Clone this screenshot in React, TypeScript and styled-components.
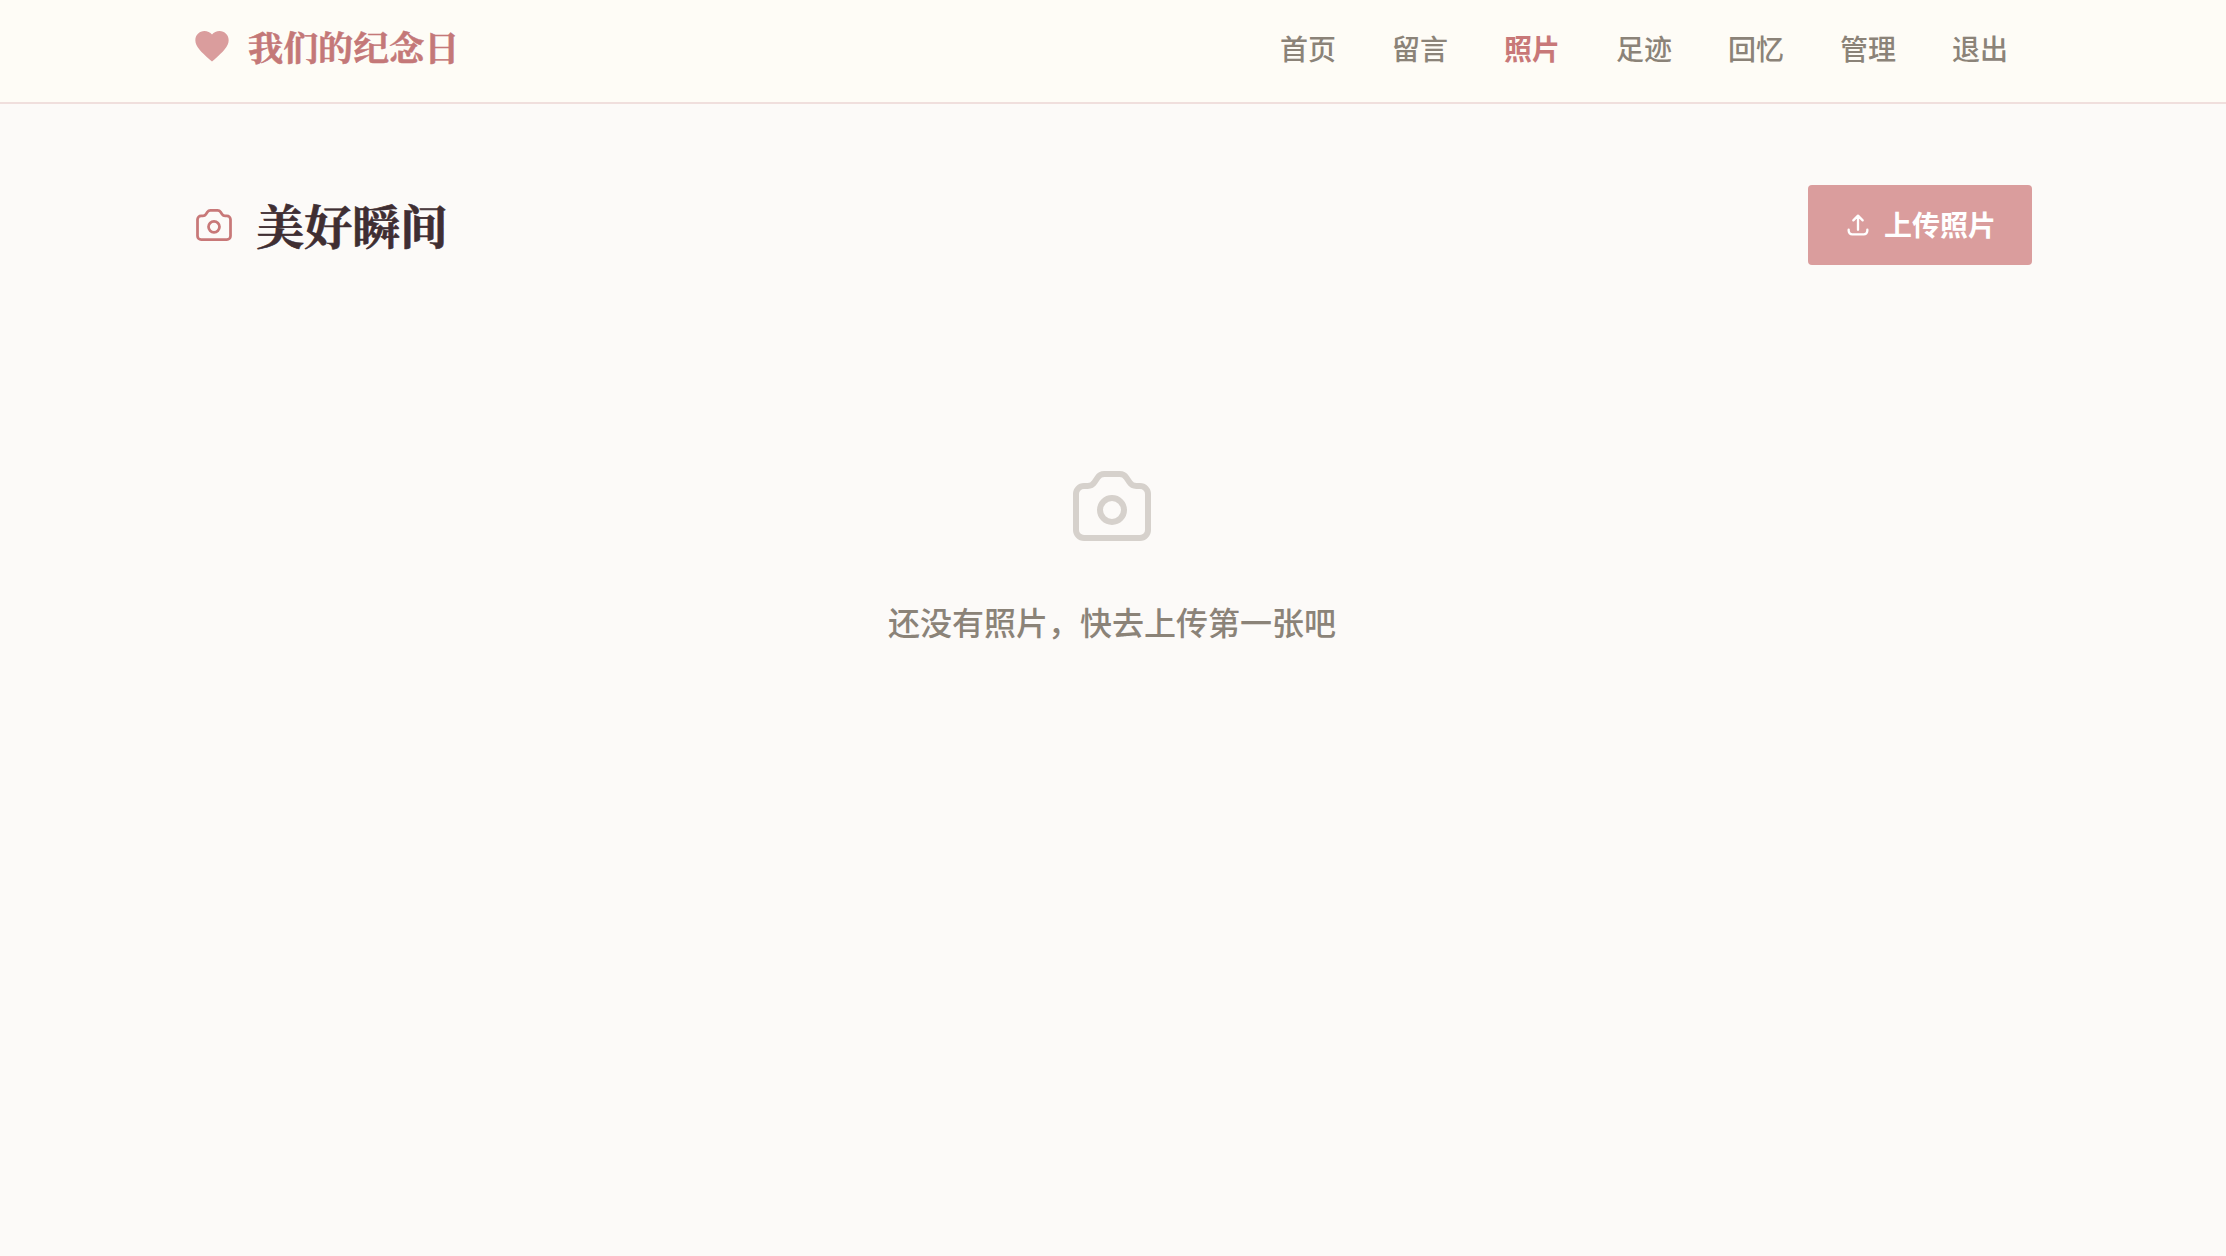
import styled, { createGlobalStyle } from "styled-components";

const navItems = ["首页", "留言", "照片", "足迹", "回忆", "管理", "退出"];

export default function App() {
  return (
    <>
      <GlobalStyle />
      <Header>
        <HeaderInner>
          <Brand>
            <HeartIcon viewBox="0 0 24 24" aria-hidden="true">
              <path d="M12 21.35l-1.45-1.32C5.4 15.36 2 12.28 2 8.5 2 5.42 4.42 3 7.5 3c1.74 0 3.41.81 4.5 2.09C13.09 3.81 14.76 3 16.5 3 19.58 3 22 5.42 22 8.5c0 3.78-3.4 6.86-8.55 11.54L12 21.35z" />
            </HeartIcon>
            <BrandText>我们的纪念日</BrandText>
          </Brand>

          <Nav>
            {navItems.map((item) => (
              <NavLink key={item} href="#" $active={item === "照片"}>
                {item}
              </NavLink>
            ))}
          </Nav>
        </HeaderInner>
      </Header>

      <Main>
        <TitleRow>
          <TitleGroup>
            <CameraIcon size={44} color="#c87878" />
            <Title>美好瞬间</Title>
          </TitleGroup>

          <UploadButton type="button">
            <UploadIcon viewBox="0 0 24 24" aria-hidden="true">
              <path d="M4 16v1a3 3 0 003 3h10a3 3 0 003-3v-1m-4-8l-4-4m0 0L8 8m4-4v12" />
            </UploadIcon>
            <UploadLabel>上传照片</UploadLabel>
          </UploadButton>
        </TitleRow>

        <EmptyState>
          <CameraIcon size={96} color="#d6d1cc" />
          <EmptyText>还没有照片，快去上传第一张吧</EmptyText>
        </EmptyState>
      </Main>
    </>
  );
}

function CameraIcon({ size, color }: { size: number; color: string }) {
  return (
    <LineIcon $size={size} $color={color} viewBox="0 0 24 24" aria-hidden="true">
      <path d="M3 9a2 2 0 012-2h.93a2 2 0 001.664-.89l.812-1.22A2 2 0 0110.07 4h3.86a2 2 0 011.664.89l.812 1.22A2 2 0 0018.07 7H19a2 2 0 012 2v9a2 2 0 01-2 2H5a2 2 0 01-2-2V9z" />
      <path d="M15 13a3 3 0 11-6 0 3 3 0 016 0z" />
    </LineIcon>
  );
}

/* ===== styled-components ===== */

const GlobalStyle = createGlobalStyle`
  * {
    box-sizing: border-box;
  }

  body {
    margin: 0;
    min-height: 100vh;
    background-color: #fcfaf8;
    font-family: "Noto Sans CJK SC", sans-serif;
  }
`;

const Header = styled.header`
  height: 104px;
  background-color: #fefcf6;
  border-bottom: 2px solid #f0dfdd;
`;

const HeaderInner = styled.div`
  width: 1840px;
  height: 92px;
  margin: 0 0 0 192px;
  display: flex;
  align-items: center;
  justify-content: space-between;
`;

const Brand = styled.div`
  display: flex;
  align-items: center;
  gap: 16px;
`;

const HeartIcon = styled.svg`
  width: 40px;
  height: 40px;
  fill: #da9d9d;
`;

const BrandText = styled.span`
  font-family: "Noto Serif SC", "Noto Serif CJK SC", "Noto Sans CJK SC", serif;
  font-size: 35.2px;
  line-height: 50px;
  font-weight: 700;
  color: #c47878;
  -webkit-text-stroke: 0.5px;
`;

const Nav = styled.nav`
  display: flex;
  align-items: center;
  gap: 8px;
`;

const NavLink = styled.a<{ $active: boolean }>`
  padding: 3px 24px 0;
  font-size: 28px;
  line-height: 40px;
  font-weight: ${({ $active }) => ($active ? 700 : 500)};
  text-decoration: none;
  color: ${({ $active }) => ($active ? "#c87878" : "#8b8378")};
`;

const Main = styled.main`
  width: 1840px;
  margin: 0 0 0 192px;
  padding-top: 81px;
`;

const TitleRow = styled.div`
  display: flex;
  align-items: center;
  justify-content: space-between;
`;

const TitleGroup = styled.div`
  display: flex;
  align-items: center;
  gap: 20px;
`;

const Title = styled.h1`
  margin: 0;
  font-family: "Noto Serif SC", "Noto Serif CJK SC", "Noto Sans CJK SC", serif;
  font-size: 48px;
  line-height: 64px;
  font-weight: 700;
  color: #3f2e32;
  -webkit-text-stroke: 0.6px;
`;

const LineIcon = styled.svg<{ $size: number; $color: string }>`
  width: ${({ $size }) => $size}px;
  height: ${({ $size }) => $size}px;
  fill: none;
  stroke: ${({ $color }) => $color};
  stroke-width: 1.5;
  stroke-linecap: round;
  stroke-linejoin: round;
`;

const UploadButton = styled.button`
  width: 224px;
  height: 80px;
  border: none;
  border-radius: 4px;
  display: flex;
  align-items: center;
  justify-content: center;
  gap: 12px;
  background-color: #da9d9d;
  color: #ffffff;
  font-family: inherit;
  font-size: 28px;
  font-weight: 700;
`;

const UploadLabel = styled.span`
  padding-bottom: 2px;
`;

const UploadIcon = styled.svg`
  width: 28px;
  height: 28px;
  fill: none;
  stroke: currentColor;
  stroke-width: 2;
  stroke-linecap: round;
  stroke-linejoin: round;
`;

const EmptyState = styled.div`
  padding-top: 193px;
  display: flex;
  flex-direction: column;
  align-items: center;
`;

const EmptyText = styled.p`
  margin: 43px 0 0;
  font-size: 32px;
  line-height: 48px;
  font-weight: 500;
  color: #8b8378;
`;
